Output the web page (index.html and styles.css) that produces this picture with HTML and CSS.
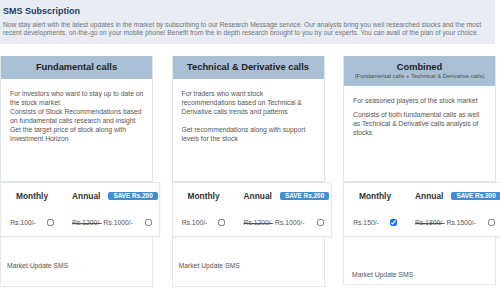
FILE: index.html
```html
<!DOCTYPE html>
<html lang="en">
<head>
  <meta charset="UTF-8">
  <meta name="viewport" content="width=device-width, initial-scale=1.0">
  <title>SMS Subscription</title>
  <link rel="stylesheet" href="styles.css">
</head>
<body>
  <div class="intro">
    <h1>SMS Subscription</h1>
    <p>Now stay alert with the latest updates in the market by subscribing to our Research Message service. Our analysts bring you well researched stocks and the most recent developments, on-the-go on your mobile phone! Benefit from the in depth research brought to you by our experts. You can avail of the plan of your choice.</p>
  </div>

  <div class="plans">
    <div class="plan">
      <div class="plan-info">
        <div class="plan-head">
          <h2>Fundamental calls</h2>
        </div>
        <div class="plan-body">
          <p>For investors who want to stay up to date on the stock market</p>
          <p>Consists of Stock Recommendations based on fundamental calls research and insight</p>
          <p>Get the target price of stock along with Investment Horizon</p>
        </div>
      </div>
      <div class="plan-price">
        <div class="period">Monthly</div>
        <div class="period annual">Annual <span class="save">SAVE Rs.200</span></div>
        <label class="cost">Rs.100/- <input type="checkbox"></label>
        <label class="cost annual"><s>Rs.1200/-</s> Rs.1000/- <input type="checkbox"></label>
      </div>
      <div class="plan-extra">Market Update SMS</div>
    </div>

    <div class="plan">
      <div class="plan-info">
        <div class="plan-head">
          <h2>Technical &amp; Derivative calls</h2>
        </div>
        <div class="plan-body">
          <p>For traders who want stock recommendations based on Technical &amp; Derivative calls trends and patterns</p>
          <p class="spaced">Get recommendations along with support levels for the stock</p>
        </div>
      </div>
      <div class="plan-price">
        <div class="period">Monthly</div>
        <div class="period annual">Annual <span class="save">SAVE Rs.200</span></div>
        <label class="cost">Rs.100/- <input type="checkbox"></label>
        <label class="cost annual"><s>Rs.1200/-</s> Rs.1000/- <input type="checkbox"></label>
      </div>
      <div class="plan-extra">Market Update SMS</div>
    </div>

    <div class="plan">
      <div class="plan-info">
        <div class="plan-head">
          <h2>Combined</h2>
          <small>(Fundamental calls + Technical &amp; Derivative calls)</small>
        </div>
        <div class="plan-body">
          <p>For seasoned players of the stock market</p>
          <p class="spaced-sm">Consists of both fundamental calls as well as Technical &amp; Derivative calls analysis of stocks</p>
        </div>
      </div>
      <div class="plan-price">
        <div class="period">Monthly</div>
        <div class="period annual">Annual <span class="save">SAVE Rs.300</span></div>
        <label class="cost">Rs.150/- <input type="checkbox" checked></label>
        <label class="cost annual"><s>Rs.1800/-</s> Rs.1500/- <input type="checkbox"></label>
      </div>
      <div class="plan-extra plan-extra--low">Market Update SMS</div>
    </div>
  </div>
</body>
</html>
```

FILE: styles.css
```css
body {
  font-family: 'Liberation Sans', Arial, sans-serif;
  background-color: #ffffff;
  color: #555;
  margin: 0;
  overflow: hidden;
}

.intro {
  width: 495px;
  height: 44px;
  box-sizing: border-box;
  padding: 5px 3px 0;
  background-color: #e9edf3;
}

.intro h1 {
  margin: 0;
  font-size: 9px;
  line-height: 12px;
  color: #1f3b5e;
}

.intro p {
  margin: 4px 0 0;
  font-size: 6.7px;
  line-height: 8.4px;
  color: #6f7378;
}

.plans {
  width: 496px;
  margin-top: 12px;
  display: flex;
  justify-content: space-between;
}

.plan {
  width: 153px;
  display: flex;
  flex-direction: column;
}

.plan-info {
  height: 126px;
  display: flex;
  flex-direction: column;
  border: 1px solid #dfe5ec;
  border-top: none;
  box-sizing: border-box;
}

.plan-head {
  background-color: #a9bfd5;
  text-align: center;
  padding: 5px 0 6px;
}

.plan-head h2 {
  margin: 0;
  font-size: 9.3px;
  line-height: 12px;
  color: #222;
}

.plan-head small {
  display: block;
  font-size: 5.9px;
  line-height: 8px;
  color: #4a4f55;
  margin-top: -1px;
}

.plan-body {
  flex: 1;
  padding: 9.5px 7px 0 9px;
}

.plan-body p {
  margin: 0;
  font-size: 6.8px;
  line-height: 9px;
}

.plan-body p.spaced {
  margin-top: 9px;
}

.plan-body p.spaced-sm {
  margin-top: 5px;
}

.plan-price {
  width: 160px;
  height: 55px;
  box-sizing: border-box;
  padding: 7px 0 0;
  background: #fff;
  border: 1px solid #e3e8ee;
  box-shadow: 0 1px 2px rgba(0, 0, 0, 0.06);
  display: grid;
  grid-template-columns: 62px 1fr;
  grid-template-rows: 12px 12px;
  row-gap: 14px;
  align-items: center;
}

.period {
  font-size: 8.4px;
  font-weight: bold;
  color: #333;
  text-align: center;
}

.period.annual {
  text-align: left;
  padding-left: 9px;
  display: flex;
  align-items: center;
  gap: 8px;
}

.save {
  display: inline-block;
  background-color: #3d8fd1;
  color: #fff;
  font-size: 6.4px;
  line-height: 8px;
  padding: 0 5px;
  border-radius: 2px;
}

.cost {
  font-size: 6.8px;
  color: #555;
  display: flex;
  align-items: center;
  justify-content: center;
  gap: 11px;
}

.cost.annual {
  justify-content: flex-start;
  padding-left: 9px;
  gap: 0;
}

.cost.annual s {
  margin-right: 2px;
}

.cost.annual input {
  margin-left: auto;
  margin-right: 7px;
}

.cost input {
  width: 7px;
  height: 7px;
  margin: 0;
  accent-color: #1a73e8;
}

.plan-extra {
  height: 50px;
  box-sizing: border-box;
  padding: 25px 6px 0;
  border: 1px solid #e3e8ee;
  border-top: none;
  font-size: 6.8px;
  line-height: 8px;
  color: #555;
}

.plan-extra--low {
  height: 48px;
  padding: 34px 8px 0;
}
```
